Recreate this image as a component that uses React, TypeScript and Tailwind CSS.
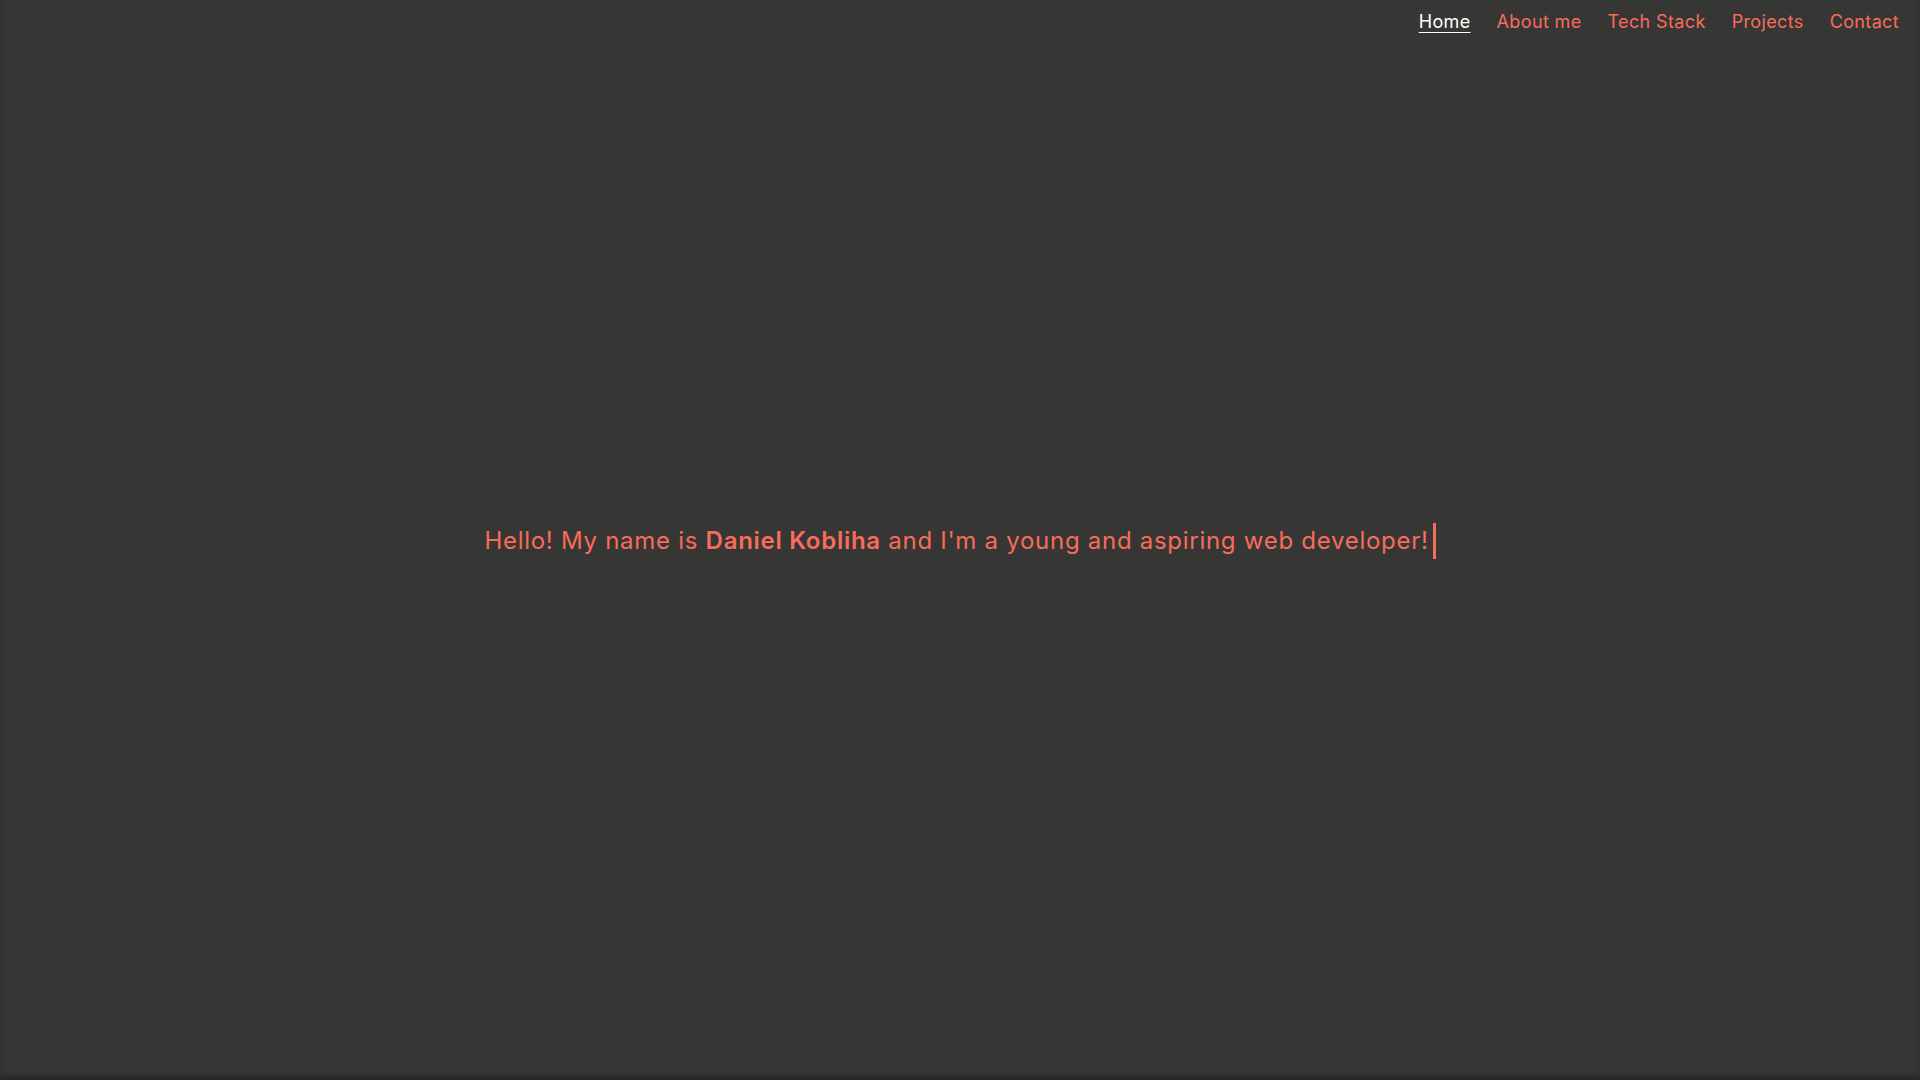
import React from "react";

export default function App() {
  const links = ["Home", "About me", "Tech Stack", "Projects", "Contact"];
  return (
    <div
      className="h-screen w-full bg-[#363634] flex flex-col shadow-[inset_0_-6px_6px_-3px_rgba(0,0,0,0.35)]"
      style={{ fontFamily: "Inter, 'Noto Sans', sans-serif" }}
    >
      <nav className="flex justify-end gap-[26px] pr-[21px] pt-[10px] h-[40px]">
        {links.map((l, i) => (
          <a
            key={l}
            href="#"
            className={
              i === 0
                ? "text-white underline underline-offset-[4px] text-[18px] leading-[24px] tracking-[0.02em]"
                : "text-[#f86c5b] text-[18px] leading-[24px] tracking-[0.02em]"
            }
          >
            {l}
          </a>
        ))}
      </nav>
      <main className="flex-1 flex items-center justify-center -mt-[38px]">
        <p className="text-[#f86c5b] text-[24px] leading-[36px] flex items-center tracking-[0.03em]">
          <span>
            Hello! My name is <b className="font-semibold">Daniel Kobliha</b> and I'm a young and aspiring web developer!
          </span>
          <span className="inline-block w-[3px] h-[36px] bg-[#f86c5b] ml-[4px]" />
        </p>
      </main>
    </div>
  );
}
